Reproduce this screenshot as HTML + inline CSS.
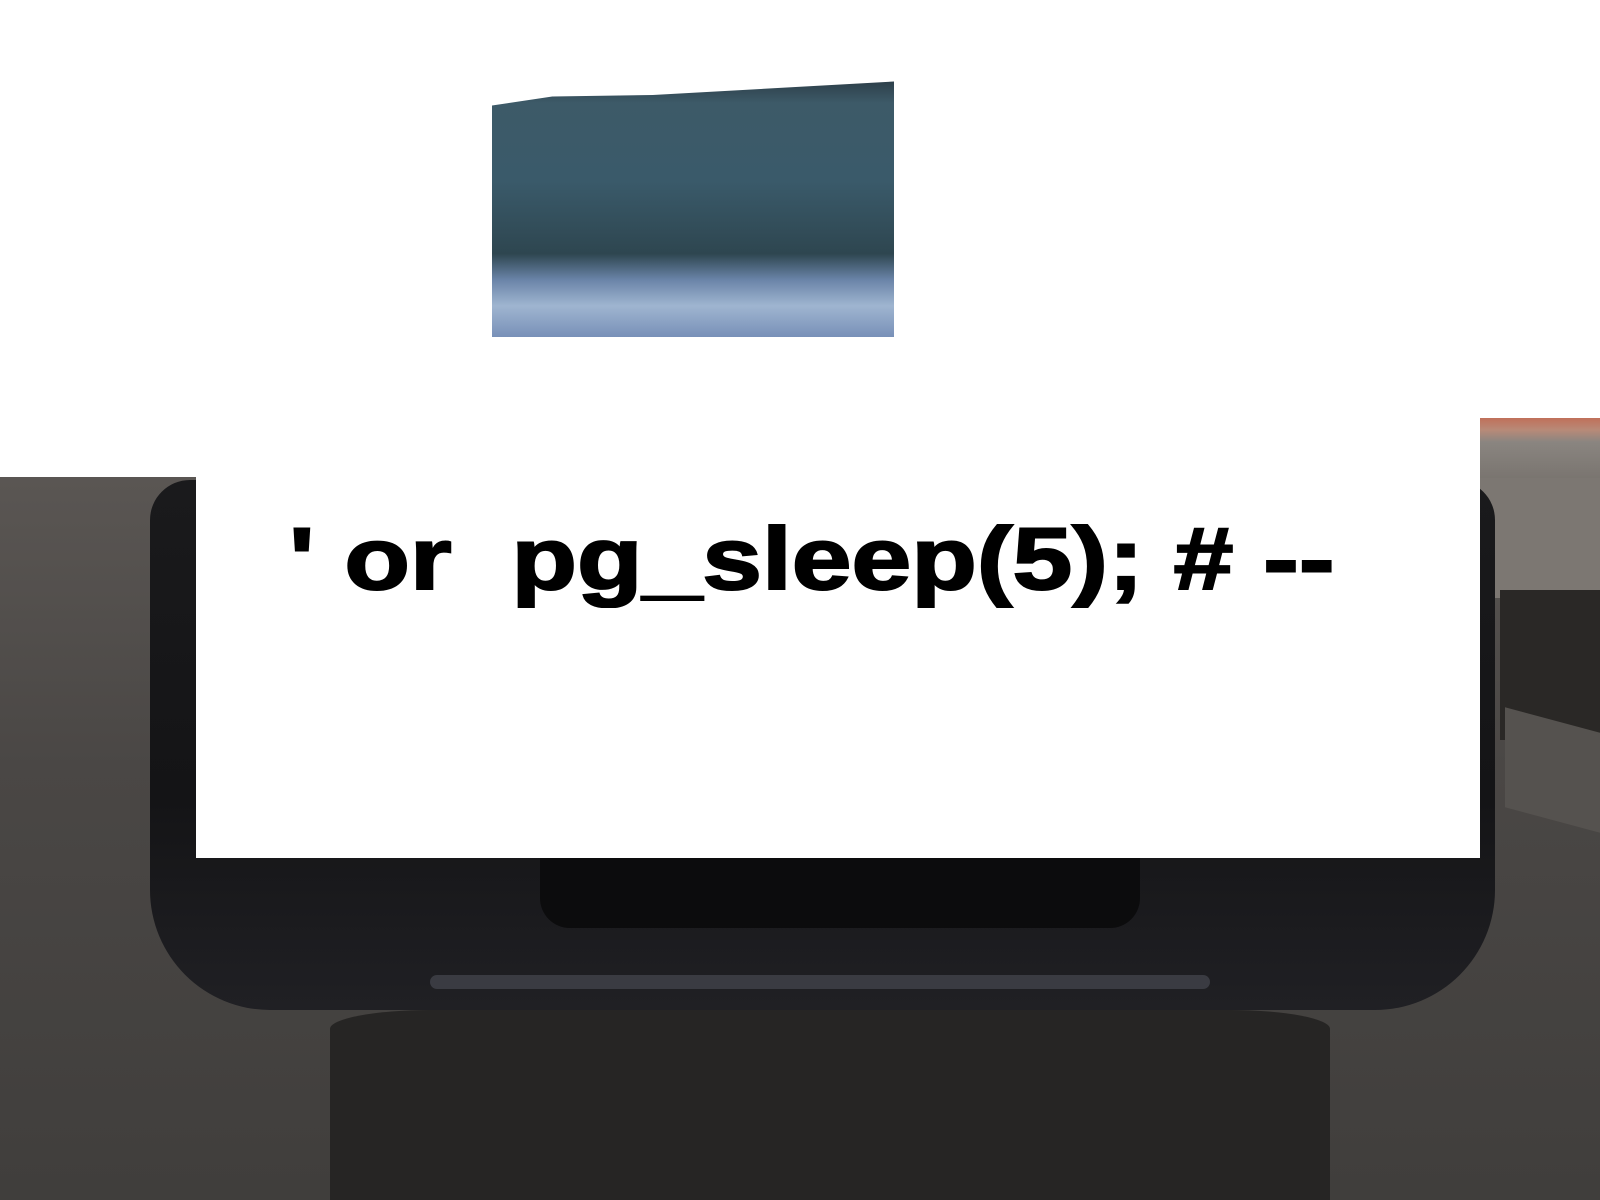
<!DOCTYPE html>
<html><head><style>
html,body{margin:0;padding:0}
body{width:1600px;height:1200px;position:relative;overflow:hidden;background:#fff;font-family:"Liberation Sans",sans-serif}
.a{position:absolute}
</style></head><body>
<div class="a" style="left:0;top:477px;width:1600px;height:723px;background:linear-gradient(180deg,#5a5653 0%,#4a4745 40%,#403e3c 100%)"></div>
<div class="a" style="left:1480px;top:418px;width:120px;height:60px;background:linear-gradient(180deg,#c0705a 0%,#b88a78 20%,#8a8580 40%,#7a7570 100%)"></div>
<div class="a" style="left:1480px;top:478px;width:120px;height:120px;background:#7c7772"></div>
<div class="a" style="left:1500px;top:590px;width:100px;height:150px;background:#2a2826"></div>
<div class="a" style="left:1505px;top:720px;width:95px;height:100px;background:#55524f;transform:skewY(15deg)"></div>
<div class="a" style="left:150px;top:480px;width:1345px;height:530px;background:linear-gradient(180deg,#1a1a1c 0%,#141416 60%,#202024 100%);border-radius:40px 40px 120px 120px"></div>
<div class="a" style="left:540px;top:858px;width:600px;height:70px;background:#0c0c0d;border-radius:0 0 30px 30px"></div>
<div class="a" style="left:430px;top:975px;width:780px;height:14px;background:#3a3b42;border-radius:10px"></div>
<div class="a" style="left:330px;top:1010px;width:1000px;height:190px;background:#262524;border-radius:10% 10% 0 0"></div>
<div class="a" style="left:196px;top:0;width:1284px;height:858px;background:#fff"></div>
<div class="a" style="left:0;top:0;width:1600px;height:418px;background:#fff"></div>
<div class="a" style="left:0;top:418px;width:196px;height:59px;background:#fff"></div>
<div class="a" style="left:492px;top:77px;width:402px;height:260px;background:linear-gradient(180deg,#2a3a44 0%,#3d5a68 10%,#3a5a6a 40%,#2e4650 68%,#6a84a8 78%,#9fb5d0 88%,#7890b8 100%);overflow:hidden">
<div class="a" style="left:0;top:0;width:402px;height:30px;background:#fff;clip-path:polygon(0 0,100% 0,100% 15%,40% 60%,15% 65%,0 95%)"></div>
</div>
<div class="a" style="left:289px;top:508px;font-size:88px;font-weight:bold;color:#000;white-space:pre;transform:scaleX(1.22);transform-origin:0 0;-webkit-text-stroke:2px #000">' or  pg_sleep(5); # --</div>
</body></html>
